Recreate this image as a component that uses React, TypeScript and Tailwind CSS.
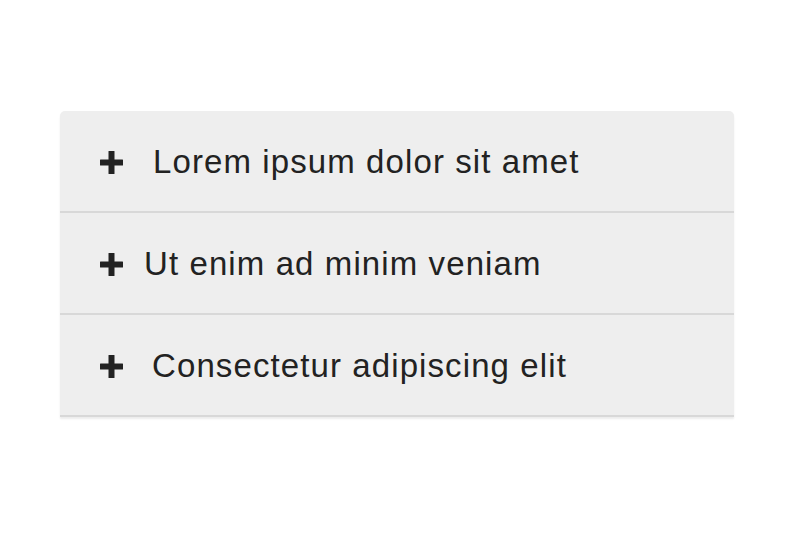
const items = [
  { title: "Lorem ipsum dolor sit amet", gap: "ml-[30px]" },
  { title: "Ut enim ad minim veniam", gap: "ml-[21px]" },
  { title: "Consectetur adipiscing elit", gap: "ml-[29px]" },
];

function Plus() {
  return (
    <svg width="23" height="23" viewBox="0 0 23 23" className="shrink-0 mt-[2px]">
      <rect x="8.5" y="0" width="6" height="23" rx="0.5" fill="#222" />
      <rect x="0" y="8.5" width="23" height="6" rx="0.5" fill="#222" />
    </svg>
  );
}

export default function App() {
  return (
    <div className="w-[800px] h-[533px] bg-white pt-[111px] pl-[60px]">
      <div className="w-[674px] rounded-t-[5px] bg-[#eeeeee] shadow-[0_2px_2px_rgba(0,0,0,0.08)]">
        {items.map((item) => (
          <div
            key={item.title}
            className="h-[102px] flex items-center pl-[40px] border-b-2 border-[#d8d8d8] text-[#222222]"
          >
            <Plus />
            <span
              className={`${item.gap} text-[33px] tracking-[1.1px] leading-none`}
              style={{ fontFamily: '"Liberation Sans", Arial, sans-serif' }}
            >
              {item.title}
            </span>
          </div>
        ))}
      </div>
    </div>
  );
}
